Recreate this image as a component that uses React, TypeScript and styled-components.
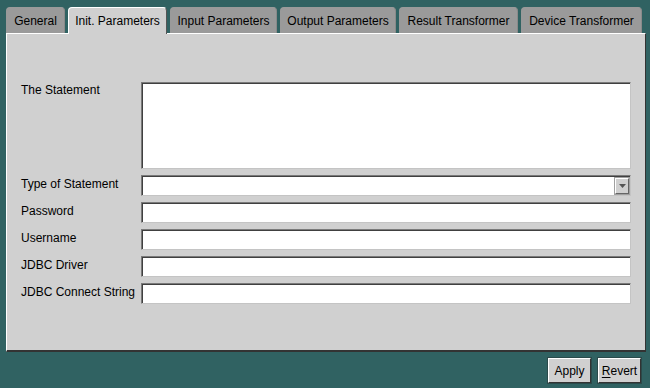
import React from 'react';
import styled, { createGlobalStyle } from 'styled-components';

const GlobalStyle = createGlobalStyle`
  html, body {
    margin: 0;
    padding: 0;
    background: #306262;
  }
  body {
    font-family: 'Liberation Sans', Arial, sans-serif;
    font-size: 12px;
    color: #000;
  }
`;

const Window = styled.div`
  box-sizing: border-box;
  width: 650px;
  height: 388px;
  padding: 7px 4px 0 6px;
  display: flex;
  flex-direction: column;
  background: #306262;
`;

const TabBar = styled.div`
  display: flex;
  gap: 3px;
  height: 26px;
  align-items: flex-end;
`;

const Tab = styled.div<{ $active?: boolean; $width: number }>`
  box-sizing: border-box;
  position: relative;
  z-index: ${({ $active }) => ($active ? 2 : 0)};
  width: ${({ $width }) => $width}px;
  height: ${({ $active }) => ($active ? '27px' : '26px')};
  margin-bottom: ${({ $active }) => ($active ? '-1px' : '0')};
  display: flex;
  align-items: center;
  justify-content: center;
  padding-bottom: ${({ $active }) => ($active ? '1px' : '0')};
  border-radius: 4px 4px 0 0;
  background: ${({ $active }) => ($active ? '#d0d0d0' : '#9a9a9a')};
  border-top: 1px solid ${({ $active }) => ($active ? '#ffffff' : '#9a9a9a')};
  border-left: 1px solid ${({ $active }) => ($active ? '#ffffff' : '#9a9a9a')};
  border-right: 1px solid ${({ $active }) => ($active ? '#555555' : '#8a8a8a')};
  white-space: nowrap;
  cursor: default;
`;

const Panel = styled.div`
  box-sizing: border-box;
  width: 640px;
  height: 319px;
  background: #d0d0d0;
  border-top: 1px solid #ffffff;
  border-left: 1px solid #ffffff;
  border-right: 1px solid #333333;
  border-bottom: 2px solid #333333;
  padding: 48px 14px 0 14px;
`;

const Form = styled.div`
  display: grid;
  grid-template-columns: 121px 1fr;
  row-gap: 6px;
  align-items: center;
`;

const Label = styled.label<{ $top?: boolean }>`
  align-self: ${({ $top }) => ($top ? 'start' : 'center')};
  padding-top: ${({ $top }) => ($top ? '1px' : '0')};
  padding-bottom: ${({ $top }) => ($top ? '0' : '3px')};
  line-height: 14px;
  white-space: nowrap;
`;

const fieldBorder = `
  box-sizing: border-box;
  border-style: solid;
  border-width: 1px;
  border-color: #7a7a7a #c4c4c4 #c4c4c4 #7a7a7a;
  box-shadow: inset 1px 1px 0 #404040, inset -1px -1px 0 #ffffff;
  background: #ffffff;
  margin: 0;
  outline: none;
  font-family: 'Liberation Sans', Arial, sans-serif;
  font-size: 12px;
`;

const TextInput = styled.input`
  ${fieldBorder}
  width: 490px;
  height: 21px;
  margin-left: -1px;
  padding: 0 4px;
`;

const TextArea = styled.textarea`
  ${fieldBorder}
  display: block;
  width: 490px;
  height: 87px;
  margin-left: -1px;
  resize: none;
  padding: 3px 4px;
`;

const Combo = styled.div`
  ${fieldBorder}
  width: 490px;
  height: 21px;
  margin-left: -1px;
  display: flex;
  justify-content: flex-end;
  padding: 2px 1px 1px 2px;
`;

const ComboButton = styled.div`
  box-sizing: border-box;
  width: 14px;
  height: 100%;
  background: #d0d0d0;
  border-style: solid;
  border-width: 1px;
  border-color: #ffffff #666666 #666666 #ffffff;
  box-shadow: 0 0 0 1px #a0a0a0;
  display: flex;
  align-items: center;
  justify-content: center;
`;

const ButtonRow = styled.div`
  display: flex;
  justify-content: flex-end;
  gap: 7px;
  padding: 6px 5px 0 0;
`;

const Button = styled.button`
  box-sizing: border-box;
  width: 43px;
  height: 25px;
  padding: 0;
  background: #d0d0d0;
  border-style: solid;
  border-width: 1px;
  border-color: #ffffff #333333 #333333 #ffffff;
  box-shadow: 0 0 0 1px #2a4a4a;
  font-family: 'Liberation Sans', Arial, sans-serif;
  font-size: 12px;
  color: #000;
  cursor: default;
  u {
    text-decoration: underline;
    text-underline-offset: 2px;
  }
`;

const tabs = [
  { name: 'General', width: 59 },
  { name: 'Init. Parameters', width: 99 },
  { name: 'Input Parameters', width: 107 },
  { name: 'Output Parameters', width: 116 },
  { name: 'Result Transformer', width: 119 },
  { name: 'Device Transformer', width: 121 },
];

const fields = ['Password', 'Username', 'JDBC Driver', 'JDBC Connect String'];

const App = () => {
  return (
    <Window>
      <GlobalStyle />
      <TabBar>
        {tabs.map((t) => (
          <Tab key={t.name} $width={t.width} $active={t.name === 'Init. Parameters'}>
            {t.name}
          </Tab>
        ))}
      </TabBar>
      <Panel>
        <Form>
          <Label $top>The Statement</Label>
          <TextArea defaultValue="" />
          <Label>Type of Statement</Label>
          <Combo>
            <ComboButton>
              <svg width="7" height="4" viewBox="0 0 7 4">
                <path d="M0 0h7L3.5 4z" fill="#555" />
              </svg>
            </ComboButton>
          </Combo>
          {fields.map((f) => (
            <React.Fragment key={f}>
              <Label>{f}</Label>
              <TextInput defaultValue="" />
            </React.Fragment>
          ))}
        </Form>
      </Panel>
      <ButtonRow>
        <Button>Apply</Button>
        <Button>
          <u>R</u>evert
        </Button>
      </ButtonRow>
    </Window>
  );
};

export default App;
